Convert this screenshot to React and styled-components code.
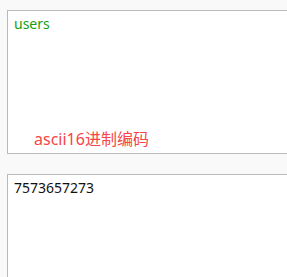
import React from "react";
import styled, { createGlobalStyle } from "styled-components";

const GlobalStyle = createGlobalStyle`
  html, body {
    margin: 0;
    padding: 0;
    background: #f9f9f9;
    overflow: hidden;
  }
`;

const Frame = styled.div`
  width: 100vw;
  height: 100vh;
  overflow: hidden;
`;

const Page = styled.div`
  display: flex;
  flex-direction: column;
  gap: 20px;
  padding: 10px 0 0 7px;
  width: 320px;
  font-family: "Noto Sans", "Noto Sans CJK SC", sans-serif;
`;

const Box = styled.div`
  display: flex;
  flex-direction: column;
  justify-content: space-between;
  box-sizing: border-box;
  height: ${(p) => p.$height}px;
  border: 1px solid #b9b9b9;
  background: #fff;
  padding: 3px 6px 4px;
`;

const Content = styled.div`
  font-size: 14px;
  line-height: 19px;
  color: ${(p) => p.$color};
`;

const Label = styled.div`
  font-size: 16px;
  line-height: 20px;
  color: #f64646;
  padding-left: 20px;
`;

const App = () => (
  <Frame>
    <GlobalStyle />
    <Page>
      <Box $height={144}>
        <Content $color="#13a016">users</Content>
        <Label>ascii16进制编码</Label>
      </Box>
      <Box $height={120}>
        <Content $color="#111">7573657273</Content>
      </Box>
    </Page>
  </Frame>
);

export default App;
